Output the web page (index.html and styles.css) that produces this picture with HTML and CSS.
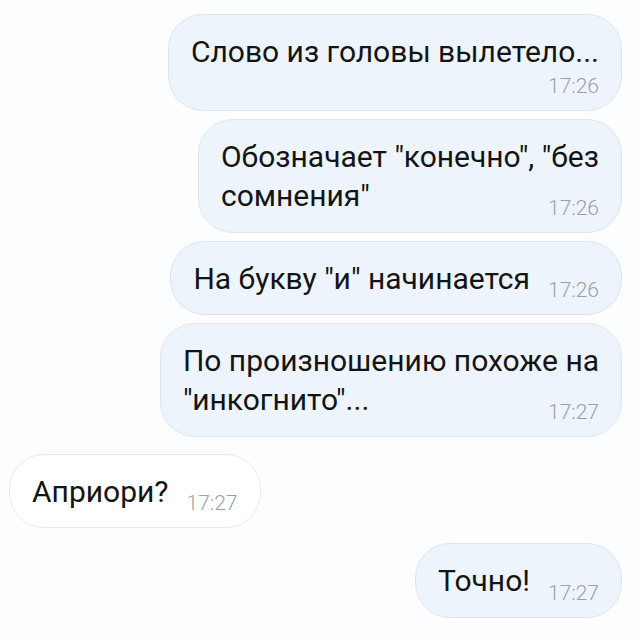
FILE: index.html
```html
<!DOCTYPE html>
<html lang="ru">
<head>
    <meta charset="UTF-8">
    <title>Чат</title>
    <link rel="stylesheet" href="styles.css">
</head>
<body>
    <div class="chat">
        <div class="msg out">
            <p class="text">Слово из головы вылетело...</p>
            <span class="time below">17:26</span>
        </div>

        <div class="msg out">
            <p class="text">Обозначает "конечно", "без<br>сомнения"<span class="time">17:26</span></p>
        </div>

        <div class="msg out">
            <p class="text">На букву "и" начинается<span class="time">17:26</span></p>
        </div>

        <div class="msg out">
            <p class="text">По произношению похоже на<br>"инкогнито"...<span class="time">17:27</span></p>
        </div>

        <div class="msg in">
            <p class="text">Априори?<span class="time">17:27</span></p>
        </div>

        <div class="msg out group-start">
            <p class="text">Точно!<span class="time">17:27</span></p>
        </div>
    </div>
</body>
</html>
```

FILE: styles.css
```css
html, body {
    margin: 0;
    height: 100%;
    background: #fbfdff;
}
body {
    font-family: Roboto, "Liberation Sans", sans-serif;
    color: #141414;
}
.chat {
    display: flex;
    flex-direction: column;
    gap: 8px;
    padding: 14px 18px 0 9px;
}
.msg {
    display: flow-root;
    padding: 17px 22px 14px 22px;
    border-radius: 35px;
    border: 1px solid #dfe4ea;
}
.msg.out {
    align-self: flex-end;
    background: #eef4fc;
}
.msg.in {
    align-self: flex-start;
    margin-top: 9px;
    background: #ffffff;
    border-color: #e8e9eb;
}
.group-start {
    margin-top: 7px;
}
.text {
    margin: 0;
    font-size: 30px;
    line-height: 39px;
}

/* время прижато к правому краю последней строки */
.time {
    float: right;
    margin: 21.5px 0 0 18px;
    font-size: 21px;
    line-height: 20px;
    font-weight: 300;
    color: #9c9fa4;
}
.time.below {
    float: none;
    display: block;
    text-align: right;
    margin: 5px 0 0 0;
}
```
